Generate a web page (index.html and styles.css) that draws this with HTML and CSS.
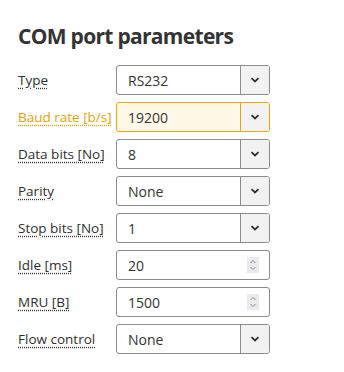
FILE: index.html
```html
<!DOCTYPE html>
<html lang="en">
<head>
    <meta charset="UTF-8">
    <meta name="viewport" content="width=device-width, initial-scale=1.0">
    <title>COM port parameters</title>
    <link rel="stylesheet" href="styles.css">
</head>
<body>

    <h2>COM port parameters</h2>

    <div class="params">
        <div class="row">
            <label class="label">Type</label>
            <div class="field select">
                <span class="value">RS232</span>
                <span class="drop"><svg width="10" height="6" viewBox="0 0 10 6"><path d="M1.5 1.2 L5 4.5 L8.5 1.2" fill="none" stroke="#333" stroke-width="1.8"/></svg></span>
            </div>
        </div>

        <div class="row changed">
            <label class="label">Baud rate [b/s]</label>
            <div class="field select">
                <span class="value">19200</span>
                <span class="drop"><svg width="10" height="6" viewBox="0 0 10 6"><path d="M1.5 1.2 L5 4.5 L8.5 1.2" fill="none" stroke="#333" stroke-width="1.8"/></svg></span>
            </div>
        </div>

        <div class="row">
            <label class="label">Data bits [No]</label>
            <div class="field select">
                <span class="value">8</span>
                <span class="drop"><svg width="10" height="6" viewBox="0 0 10 6"><path d="M1.5 1.2 L5 4.5 L8.5 1.2" fill="none" stroke="#333" stroke-width="1.8"/></svg></span>
            </div>
        </div>

        <div class="row">
            <label class="label">Parity</label>
            <div class="field select">
                <span class="value">None</span>
                <span class="drop"><svg width="10" height="6" viewBox="0 0 10 6"><path d="M1.5 1.2 L5 4.5 L8.5 1.2" fill="none" stroke="#333" stroke-width="1.8"/></svg></span>
            </div>
        </div>

        <div class="row">
            <label class="label">Stop bits [No]</label>
            <div class="field select">
                <span class="value">1</span>
                <span class="drop"><svg width="10" height="6" viewBox="0 0 10 6"><path d="M1.5 1.2 L5 4.5 L8.5 1.2" fill="none" stroke="#333" stroke-width="1.8"/></svg></span>
            </div>
        </div>

        <div class="row">
            <label class="label">Idle [ms]</label>
            <div class="field number">
                <span class="value">20</span>
                <span class="spin"><svg width="8" height="12" viewBox="0 0 8 12"><path d="M1.5 4 L4 1.5 L6.5 4 M1.5 8 L4 10.5 L6.5 8" fill="none" stroke="#8a8a96" stroke-width="1"/></svg></span>
            </div>
        </div>

        <div class="row">
            <label class="label">MRU [B]</label>
            <div class="field number">
                <span class="value">1500</span>
                <span class="spin"><svg width="8" height="12" viewBox="0 0 8 12"><path d="M1.5 4 L4 1.5 L6.5 4 M1.5 8 L4 10.5 L6.5 8" fill="none" stroke="#8a8a96" stroke-width="1"/></svg></span>
            </div>
        </div>

        <div class="row">
            <label class="label">Flow control</label>
            <div class="field select">
                <span class="value">None</span>
                <span class="drop"><svg width="10" height="6" viewBox="0 0 10 6"><path d="M1.5 1.2 L5 4.5 L8.5 1.2" fill="none" stroke="#333" stroke-width="1.8"/></svg></span>
            </div>
        </div>
    </div>

</body>
</html>
```

FILE: styles.css
```css
body {
    margin: 0;
    padding: 22px 18px;
    font-family: "Open Sans", Arial, sans-serif;
    font-size: 13.5px;
    color: #333333;
    background-color: #ffffff;
}
h2 {
    margin: 0 0 15px 0;
    font-size: 21px;
    font-weight: 700;
    letter-spacing: -0.7px;
    line-height: 28px;
    color: #333333;
}
.params {
    display: flex;
    flex-direction: column;
    gap: 7px;
}
.row {
    display: flex;
    align-items: center;
}
.label {
    width: 98px;
    color: #2f2f2f;
    text-decoration: underline dotted #333333;
    text-underline-offset: 3px;
}
.field {
    display: flex;
    width: 154px;
    height: 30px;
    box-sizing: border-box;
    border: 1px solid #8c8c8c;
    border-radius: 3px;
    background-color: #ffffff;
    overflow: hidden;
}
.value {
    flex: 1;
    display: flex;
    align-items: center;
    padding-left: 11px;
    font-size: 14px;
}
.drop {
    width: 28px;
    display: flex;
    align-items: center;
    justify-content: center;
    border-left: 1px solid #8c8c8c;
    background-color: #f2f2f2;
}
.spin {
    width: 12px;
    height: 16px;
    margin: auto 10px auto 0;
    display: flex;
    align-items: center;
    justify-content: center;
    background-color: #e9e9ee;
}
.changed .label {
    color: #e9a100;
    text-decoration-color: #e9a100;
}
.changed .field {
    border-color: #f0a800;
    background-color: #fff8e9;
}
.changed .drop {
    border-left-color: #f0a800;
}
```
